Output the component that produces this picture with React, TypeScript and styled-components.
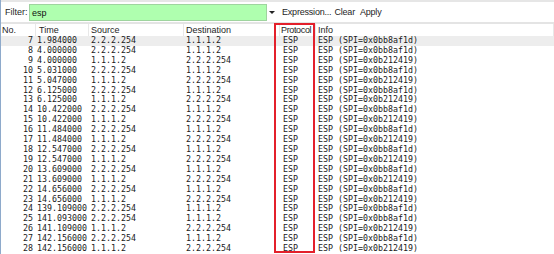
import React from 'react';
import styled, {createGlobalStyle} from 'styled-components';

const GlobalStyle = createGlobalStyle`
  html, body {
    margin: 0;
    padding: 0;
    background: #ffffff;
    overflow: hidden;
  }
`;

const Window = styled.div`
  position: relative;
  width: 554px;
  height: 254px;
  box-sizing: border-box;
  border-left: 1px solid #8eaacb;
  background: #ffffff;
  overflow: hidden;
  font-family: 'Liberation Sans', Arial, sans-serif;
`;

const TopStrip = styled.div`
  height: 2px;
  background: #e6e6e6;
`;

const FilterBar = styled.div`
  display: flex;
  align-items: center;
  height: 20px;
  padding-left: 4px;
  border-bottom: 2px solid #e4e4e4;
  font-size: 9px;
  color: #1e1e1e;
`;

const FilterLabel = styled.span`
  width: 24px;
`;

const FilterInput = styled.div`
  display: flex;
  align-items: center;
  width: 234px;
  height: 15px;
  margin-top: 1px;
  padding-left: 2px;
  border: 1px solid #9fd49f;
  background: #afffaf;
  font-size: 9px;
  color: #111;
`;

const DropArrow = styled.div`
  width: 0;
  height: 0;
  margin-left: 2px;
  border-left: 3px solid transparent;
  border-right: 3px solid transparent;
  border-top: 3px solid #222;
`;

const ToolLink = styled.span<{$gap: number}>`
  margin-left: ${p => p.$gap}px;
  letter-spacing: -0.2px;
`;

const Grid = styled.div`
  display: grid;
  grid-template-columns: 35px 53px 95px 96px 36px 1fr;
`;

const HeaderCell = styled.div<{$pad: number; $tight?: boolean}>`
  height: 12px;
  line-height: 12px;
  padding-left: ${p => p.$pad}px;
  border-right: 1px solid #e8e8e8;
  font-size: 9px;
  letter-spacing: ${p => (p.$tight ? '-0.35px' : '0')};
  color: #1e1e1e;
  white-space: nowrap;
`;

const Row = styled.div<{$shade?: boolean}>`
  display: grid;
  grid-template-columns: 35px 53px 95px 96px 36px 1fr;
  height: 9.92px;
  line-height: 9.92px;
  background: ${p => (p.$shade ? '#ededed' : 'transparent')};
  font-family: 'DejaVu Sans Mono', 'Liberation Mono', monospace;
  font-size: 8.3px;
  color: #1a1a1a;
  white-space: nowrap;
`;

const Cell = styled.div<{$pad: number; $right?: boolean}>`
  padding-left: ${p => (p.$right ? 0 : p.$pad)}px;
  padding-right: ${p => (p.$right ? p.$pad : 0)}px;
  text-align: ${p => (p.$right ? 'right' : 'left')};
`;

const Highlight = styled.div`
  position: absolute;
  left: 273px;
  top: 23px;
  width: 41px;
  height: 230px;
  box-sizing: border-box;
  border: 2.5px solid #e3202b;
`;

const columns = [
  {title: 'No.', head: 1, data: 3, right: true},
  {title: 'Time', head: 3, data: 1},
  {title: 'Source', head: 2, data: 2},
  {title: 'Destination', head: 2, data: 2},
  {title: 'Protocol', head: 1, data: 3, tight: true},
  {title: 'Info', head: 2, data: 2},
];

const A = '2.2.2.254';
const B = '1.1.1.2';
const SPI_A = 'ESP (SPI=0x0bb8af1d)';
const SPI_B = 'ESP (SPI=0x0b212419)';

const packets: [number, string, boolean][] = [
  [7, '1.984000', true],
  [8, '4.000000', true],
  [9, '4.000000', false],
  [10, '5.031000', true],
  [11, '5.047000', false],
  [12, '6.125000', true],
  [13, '6.125000', false],
  [14, '10.422000', true],
  [15, '10.422000', false],
  [16, '11.484000', true],
  [17, '11.484000', false],
  [18, '12.547000', true],
  [19, '12.547000', false],
  [20, '13.609000', true],
  [21, '13.609000', false],
  [22, '14.656000', true],
  [23, '14.656000', false],
  [24, '139.109000', true],
  [25, '141.093000', true],
  [26, '141.109000', false],
  [27, '142.156000', true],
  [28, '142.156000', false],
];

export default function App() {
  return (
    <>
      <GlobalStyle />
      <Window>
        <TopStrip />
        <FilterBar>
          <FilterLabel>Filter:</FilterLabel>
          <FilterInput>esp</FilterInput>
          <DropArrow />
          <ToolLink $gap={7}>Expression...</ToolLink>
          <ToolLink $gap={3}>Clear</ToolLink>
          <ToolLink $gap={5}>Apply</ToolLink>
        </FilterBar>
        <Grid>
          {columns.map(c => (
            <HeaderCell key={c.title} $pad={c.head} $tight={c.tight}>
              {c.title}
            </HeaderCell>
          ))}
        </Grid>
        {packets.map(([no, time, fromA], i) => {
          const values = [
            String(no),
            time,
            fromA ? A : B,
            fromA ? B : A,
            'ESP',
            fromA ? SPI_A : SPI_B,
          ];
          return (
            <Row key={no} $shade={i === 0}>
              {values.map((v, j) => (
                <Cell key={j} $pad={columns[j].data} $right={columns[j].right}>
                  {v}
                </Cell>
              ))}
            </Row>
          );
        })}
        <Highlight />
      </Window>
    </>
  );
}
